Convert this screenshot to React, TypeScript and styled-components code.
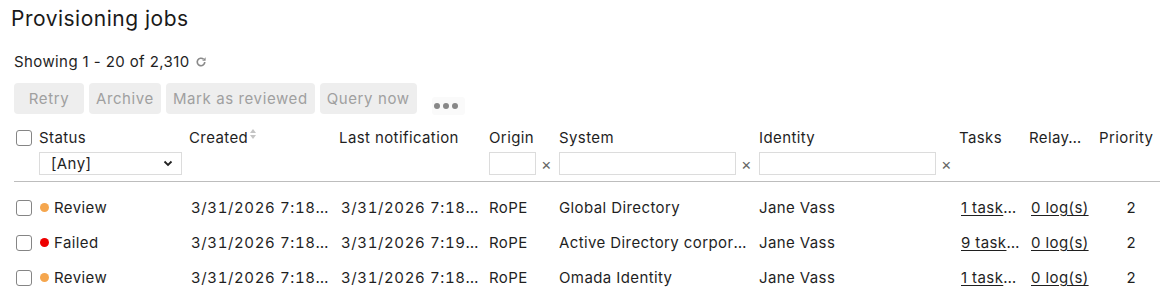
import styled, { createGlobalStyle } from "styled-components";

const GlobalStyle = createGlobalStyle`
    body {
        margin: 0;
        background: #fff;
        font-family: Inter, "Open Sans", sans-serif;
        letter-spacing: 0.4px;
        color: #1f1f1f;
    }
`;

const COLUMNS = "25px 150px 150px 150px 70px 200px 200px 70px 70px 1fr";

interface Job {
    status: "Review" | "Failed";
    created: string;
    notified: string;
    origin: string;
    system: string;
    identity: string;
    tasks: string;
    logs: string;
    priority: number;
}

const jobs: Job[] = [
    { status: "Review", created: "3/31/2026 7:18:42 AM", notified: "3/31/2026 7:18:55 AM", origin: "RoPE", system: "Global Directory", identity: "Jane Vass", tasks: "1 task(s)", logs: "0 log(s)", priority: 2 },
    { status: "Failed", created: "3/31/2026 7:18:40 AM", notified: "3/31/2026 7:19:02 AM", origin: "RoPE", system: "Active Directory corporate domain", identity: "Jane Vass", tasks: "9 task(s)", logs: "0 log(s)", priority: 2 },
    { status: "Review", created: "3/31/2026 7:18:12 AM", notified: "3/31/2026 7:18:30 AM", origin: "RoPE", system: "Omada Identity", identity: "Jane Vass", tasks: "1 task(s)", logs: "0 log(s)", priority: 2 },
];

const ProvisioningJobs = () => {
    return (
        <Page>
            <GlobalStyle />
            <Title>Provisioning jobs</Title>
            <Summary>
                Showing 1 - 20 of 2,310
                <RefreshIcon viewBox="0 0 16 16">
                    <path d="M13 8a5 5 0 1 1-1.6-3.7" fill="none" stroke="currentColor" strokeWidth="2.2" />
                    <path d="M14.2 1.8v4.6H9.6z" fill="currentColor" />
                </RefreshIcon>
            </Summary>

            <Toolbar>
                <ActionButton disabled>Retry</ActionButton>
                <ActionButton disabled>Archive</ActionButton>
                <ActionButton disabled>Mark as reviewed</ActionButton>
                <ActionButton disabled>Query now</ActionButton>
                <MoreButton>
                    <Dot /><Dot /><Dot />
                </MoreButton>
            </Toolbar>

            <Table>
                <HeaderRow>
                    <CheckCell><Checkbox /></CheckCell>
                    <HeadCell>
                        <HeadLabel>Status</HeadLabel>
                        <SelectBox>
                            [Any]
                            <svg width="10" height="7" viewBox="0 0 10 7">
                                <path d="M1.5 1.5 5 5l3.5-3.5" fill="none" stroke="#222" strokeWidth="1.8" />
                            </svg>
                        </SelectBox>
                    </HeadCell>
                    <HeadCell>
                        <HeadLabel>
                            Created
                            <SortIcon viewBox="0 0 8 12">
                                <path d="M4 1 7 5H1z" fill="#c4c4c4" />
                                <path d="M4 11 1 7h6z" fill="#c4c4c4" />
                            </SortIcon>
                        </HeadLabel>
                    </HeadCell>
                    <HeadCell><HeadLabel>Last notification</HeadLabel></HeadCell>
                    <HeadCell>
                        <HeadLabel>Origin</HeadLabel>
                        <FilterField><FilterInput /><Clear>×</Clear></FilterField>
                    </HeadCell>
                    <HeadCell>
                        <HeadLabel>System</HeadLabel>
                        <FilterField><FilterInput /><Clear>×</Clear></FilterField>
                    </HeadCell>
                    <HeadCell>
                        <HeadLabel>Identity</HeadLabel>
                        <FilterField><FilterInput /><Clear>×</Clear></FilterField>
                    </HeadCell>
                    <HeadCell><HeadLabel>Tasks</HeadLabel></HeadCell>
                    <HeadCell><HeadLabel>Relay…</HeadLabel></HeadCell>
                    <HeadCell><HeadLabel>Priority</HeadLabel></HeadCell>
                </HeaderRow>

                {jobs.map((job, i) => (
                    <Row key={i}>
                        <CheckCell><Checkbox /></CheckCell>
                        <StatusCell>
                            <StatusDot $failed={job.status === "Failed"} />
                            {job.status}
                        </StatusCell>
                        <DateCell>{job.created}</DateCell>
                        <DateCell>{job.notified}</DateCell>
                        <Cell>{job.origin}</Cell>
                        <Cell>{job.system}</Cell>
                        <Cell>{job.identity}</Cell>
                        <Cell $indent><LinkText>{job.tasks}</LinkText></Cell>
                        <Cell $indent><LinkText>{job.logs}</LinkText></Cell>
                        <PriorityCell>{job.priority}</PriorityCell>
                    </Row>
                ))}
            </Table>
        </Page>
    );
};

const Page = styled.div`
    padding: 4px 0 0 14px;
    width: 1146px;
`;

const Title = styled.h1`
    margin: 0 0 0 -3px;
    font-size: 21px;
    font-weight: 400;
    line-height: 30px;
    letter-spacing: 0.5px;
    color: #1a1a1a;
`;

const Summary = styled.div`
    display: flex;
    align-items: center;
    gap: 5px;
    margin-top: 18px;
    font-size: 15px;
    line-height: 20px;
`;

const RefreshIcon = styled.svg`
    width: 12px;
    height: 12px;
    color: #8a8a8a;
`;

const Toolbar = styled.div`
    display: flex;
    align-items: center;
    gap: 5px;
    margin-top: 10px;
`;

const ActionButton = styled.button`
    min-width: 70px;
    height: 31px;
    padding: 0 7px;
    border: none;
    border-radius: 4px;
    background: #eeeeee;
    color: #a0a0a0;
    font-family: inherit;
    font-size: 15px;
    letter-spacing: 0.6px;
`;

const MoreButton = styled.div`
    display: flex;
    align-items: center;
    gap: 3px;
    margin: 15px 0 0 10px;
    padding: 3px 2px;
    width: 29px;
    height: 12px;
    border-radius: 3px;
    background: #fafafa;
`;

const Dot = styled.span`
    width: 6px;
    height: 6px;
    border-radius: 50%;
    background: #888;
`;

const Table = styled.div`
    margin-top: 13px;
`;

const HeaderRow = styled.div`
    display: grid;
    grid-template-columns: ${COLUMNS};
    align-items: start;
    padding-bottom: 6px;
    margin-bottom: 8px;
    border-bottom: 1px solid #bdbdbd;
`;

const Row = styled.div`
    display: grid;
    grid-template-columns: ${COLUMNS};
    align-items: center;
    height: 35px;
    font-size: 15px;
`;

const CheckCell = styled.div`
    display: flex;
    align-items: center;
    height: 100%;
    max-height: 20px;
    padding-left: 2px;
`;

const Checkbox = styled.span`
    width: 14px;
    height: 14px;
    border: 1.5px solid #858585;
    border-radius: 3px;
    background: #fff;
`;

const HeadCell = styled.div`
    display: flex;
    flex-direction: column;
    gap: 4px;
    min-width: 0;
`;

const HeadLabel = styled.div`
    display: flex;
    align-items: flex-start;
    font-size: 15px;
    line-height: 20px;
    white-space: nowrap;
`;

const SortIcon = styled.svg`
    width: 8px;
    height: 12px;
    margin-left: 1px;
`;

const SelectBox = styled.div`
    display: flex;
    align-items: center;
    justify-content: space-between;
    box-sizing: border-box;
    width: 143px;
    height: 23px;
    padding: 0 8px 0 11px;
    border: 1px solid #dcdcdc;
    font-size: 15px;
`;

const FilterField = styled.div`
    display: flex;
    align-items: center;
    gap: 5px;
`;

const FilterInput = styled.input`
    box-sizing: border-box;
    width: calc(100% - 23px);
    height: 23px;
    border: 1px solid #dcdcdc;
    padding: 0 4px;
`;

const Clear = styled.span`
    font-size: 16px;
    line-height: 1;
    color: #666;
`;

const Cell = styled.div<{ $indent?: boolean }>`
    padding: 0 8px 0 ${(p) => (p.$indent ? "2px" : "0")};
    white-space: nowrap;
    overflow: hidden;
    text-overflow: ellipsis;
`;

const DateCell = styled(Cell).attrs({ $indent: true })`
    font-variant-numeric: tabular-nums;
    letter-spacing: 0.6px;
    padding-right: 7px;
`;

const StatusCell = styled.div`
    display: flex;
    align-items: center;
    gap: 5px;
    padding-left: 1px;
`;

const StatusDot = styled.span<{ $failed: boolean }>`
    width: 9px;
    height: 9px;
    border-radius: 50%;
    background: ${(p) => (p.$failed ? "#ee0000" : "#f5a64e")};
`;

const LinkText = styled.span`
    text-decoration: underline;
    text-underline-offset: 2px;
`;

const PriorityCell = styled.div`
    text-align: right;
    padding-right: 24px;
`;

export default ProvisioningJobs;
